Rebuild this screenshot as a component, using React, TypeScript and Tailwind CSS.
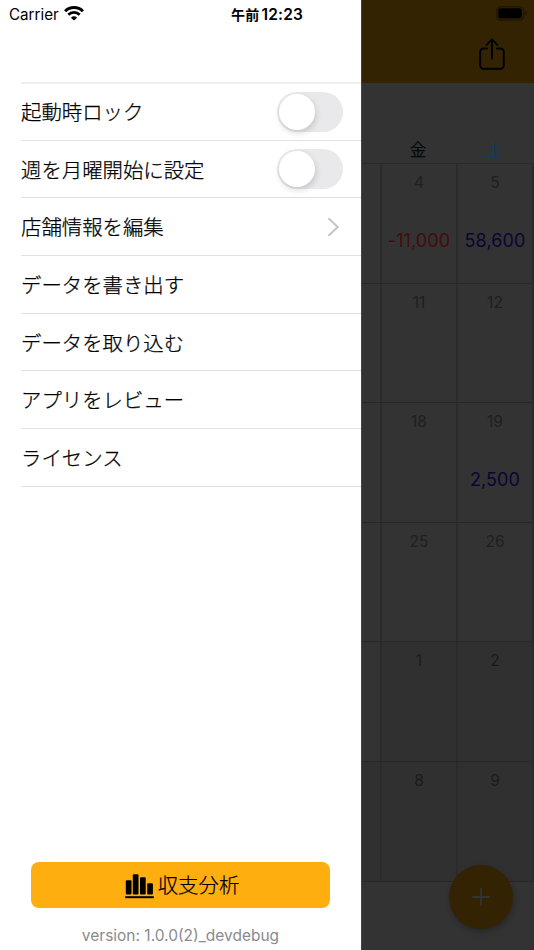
import React from 'react';

interface MenuRowProps {
  label: string;
  children?: React.ReactNode;
}

const MenuRow = ({ label, children }: MenuRowProps) => (
  <li className="flex h-[57.67px] items-center justify-between border-b border-[#e2e2e4] pr-[18px] pt-px first:h-[56.67px] first:pt-0">
    <span className="pt-[3px] text-[20.4px] font-light leading-none [-webkit-text-stroke:0.25px]">{label}</span>
    {children}
  </li>
);

const Toggle = () => (
  <span className="flex h-10 w-[66px] items-center rounded-full bg-[#e9e9eb] pl-[2px]">
    <span className="h-9 w-9 rounded-full bg-white shadow-[1px_3px_6px_rgba(0,0,0,0.15)]" />
  </span>
);

const Chevron = () => (
  <svg className="mr-[3px]" width="13" height="20" viewBox="0 0 13 20" fill="none" stroke="#c4c4c6" strokeWidth="1.9">
    <path d="M1.5 1.2 L10.8 10 L1.5 18.8" />
  </svg>
);

const WifiIcon = () => (
  <svg width="20" height="15" viewBox="0 0 20 15" fill="none" stroke="#000" strokeWidth="3">
    <path d="M1.1 5.2 A12.6 12.6 0 0 1 18.9 5.2" />
    <path d="M4.3 8.8 A8 8 0 0 1 15.7 8.8" strokeWidth="2.7" />
    <path d="M10 14.6 L6.9 11.7 A4.5 4.5 0 0 1 13.1 11.7 Z" fill="#000" stroke="none" />
  </svg>
);

const BarsIcon = () => (
  <svg width="29" height="25" viewBox="0 0 29 25" fill="#000">
    <rect x="0.8" y="6.3" width="5.7" height="14.2" rx="1" />
    <rect x="7.8" y="0.2" width="5.7" height="20.3" rx="1" />
    <rect x="15" y="3.2" width="5.7" height="17.3" rx="1" />
    <rect x="22.2" y="9.2" width="5.7" height="11.3" rx="1" />
    <rect x="0.2" y="22.2" width="28.6" height="2" />
  </svg>
);

const ShareIcon = () => (
  <svg width="26" height="32" viewBox="0 0 26 32" fill="none" stroke="#000" strokeWidth="1.9" strokeLinecap="round" strokeLinejoin="round">
    <path d="M8 10.5 H4.5 A3.3 3.3 0 0 0 1.2 13.8 V27.5 A3.3 3.3 0 0 0 4.5 30.8 H21.5 A3.3 3.3 0 0 0 24.8 27.5 V13.8 A3.3 3.3 0 0 0 21.5 10.5 H18" />
    <path d="M13 20.5 V1.5 M7.6 6.8 L13 1.4 L18.4 6.8" />
  </svg>
);

const BatteryIcon = () => (
  <svg width="32" height="15" viewBox="0 0 32 15" fill="none">
    <rect x="0.8" y="0.8" width="27" height="13.4" rx="4" stroke="#211600" strokeWidth="1.3" />
    <rect x="2.3" y="2.3" width="23.6" height="10.2" rx="2.2" fill="#000" />
    <path d="M29.6 5.2 C31.4 5.8 31.4 9 29.6 9.6 Z" fill="#211600" />
  </svg>
);

interface Cell {
  day: string;
  amount?: string;
  color?: string;
}

const weeks: Cell[][] = [
  [
    { day: '4', amount: '-11,000', color: 'text-[#440c0a]' },
    { day: '5', amount: '58,600', color: 'text-[#0c0434]' },
  ],
  [{ day: '11' }, { day: '12' }],
  [{ day: '18' }, { day: '19', amount: '2,500', color: 'text-[#0c0434]' }],
  [{ day: '25' }, { day: '26' }],
  [{ day: '1' }, { day: '2' }],
  [{ day: '8' }, { day: '9' }],
];

const Drawer = () => (
  <aside className="flex w-[361px] shrink-0 flex-col bg-white text-black">
    <div className="flex h-[82px] items-start pl-[9px] pt-[6px] text-[15.5px] leading-4">
      <span className="w-[55px] pt-px text-[15.2px]">Carrier</span>
      <WifiIcon />
      <span className="ml-[147px] whitespace-nowrap pt-px font-semibold tracking-[0.2px]">
        <span className="mr-[2px] text-[14px]">午前</span>12:23
      </span>
    </div>
    <ul className="ml-[21px] border-t-2 border-[#f0f0f1]">
      <MenuRow label="起動時ロック"><Toggle /></MenuRow>
      <MenuRow label="週を月曜開始に設定"><Toggle /></MenuRow>
      <MenuRow label="店舗情報を編集"><Chevron /></MenuRow>
      <MenuRow label="データを書き出す" />
      <MenuRow label="データを取り込む" />
      <MenuRow label="アプリをレビュー" />
      <MenuRow label="ライセンス" />
    </ul>
    <button className="mx-[31px] mt-auto flex h-[46px] items-center justify-center gap-1 rounded-[8px] bg-[#ffae0f] pl-[3px] pt-[2px] text-[20.4px] font-light leading-none [-webkit-text-stroke:0.25px]">
      <BarsIcon />
      <span>収支分析</span>
    </button>
    <p className="pb-1 pt-[18px] text-center text-[15.5px] leading-5 text-[#8a8a8e]">version: 1.0.0(2)_devdebug</p>
  </aside>
);

const Calendar = () => (
  <main className="relative flex flex-1 flex-col overflow-hidden border-l border-[#444] bg-[#333]">
    <header className="flex h-[83px] flex-col items-end bg-[#332303]">
      <div className="mr-[6px] mt-[6px] h-8"><BatteryIcon /></div>
      <div className="mr-[29px]"><ShareIcon /></div>
    </header>
    <div className="grid h-20 grid-cols-[18px_76px_76px] items-end pb-[3px] text-center text-[16.5px] font-light leading-5 [-webkit-text-stroke:0.25px]">
      <span />
      <span className="text-black">金</span>
      <span className="text-[#0d3d66]">土</span>
    </div>
    <div className="border-t border-[#292929]">
      {weeks.map((week, i) => (
        <div
          key={i}
          className={`grid h-[119.6px] grid-cols-[20px_76px_76px] border-b border-[#272727] ${i > 3 ? 'bg-[#303030]' : ''}`}
        >
          <div className={`border-r-2 border-[#2b2b2b] ${i < 5 ? 'bg-[#333]' : ''}`} />
          {week.map((cell) => (
            <div key={cell.day} className="flex flex-col items-center border-r-2 border-[#2b2b2b] pt-[9px]">
              <span className={`text-[15.5px] leading-5 ${i > 3 ? 'text-[#1b1b1b]' : 'text-[#202020]'}`}>{cell.day}</span>
              {cell.amount && (
                <span className={`mt-[36px] whitespace-nowrap text-[18px] leading-6 tracking-[0.1px] ${cell.color}`}>{cell.amount}</span>
              )}
            </div>
          ))}
        </div>
      ))}
    </div>
    <button className="absolute bottom-[21px] right-[21px] flex h-16 w-16 items-center justify-center rounded-full bg-[#332303] shadow-[1px_3px_6px_rgba(0,0,0,0.25)]">
      <svg width="18" height="18" viewBox="0 0 18 18" stroke="#333" strokeWidth="1.9">
        <path d="M9 0.3 V17.7 M0.3 9 H17.7" />
      </svg>
    </button>
  </main>
);

const App = () => {
  return (
    <div className="flex h-[950px] w-[534px] overflow-hidden font-['Inter','Noto_Sans_CJK_JP',sans-serif]">
      <Drawer />
      <Calendar />
    </div>
  );
};

export default App;
